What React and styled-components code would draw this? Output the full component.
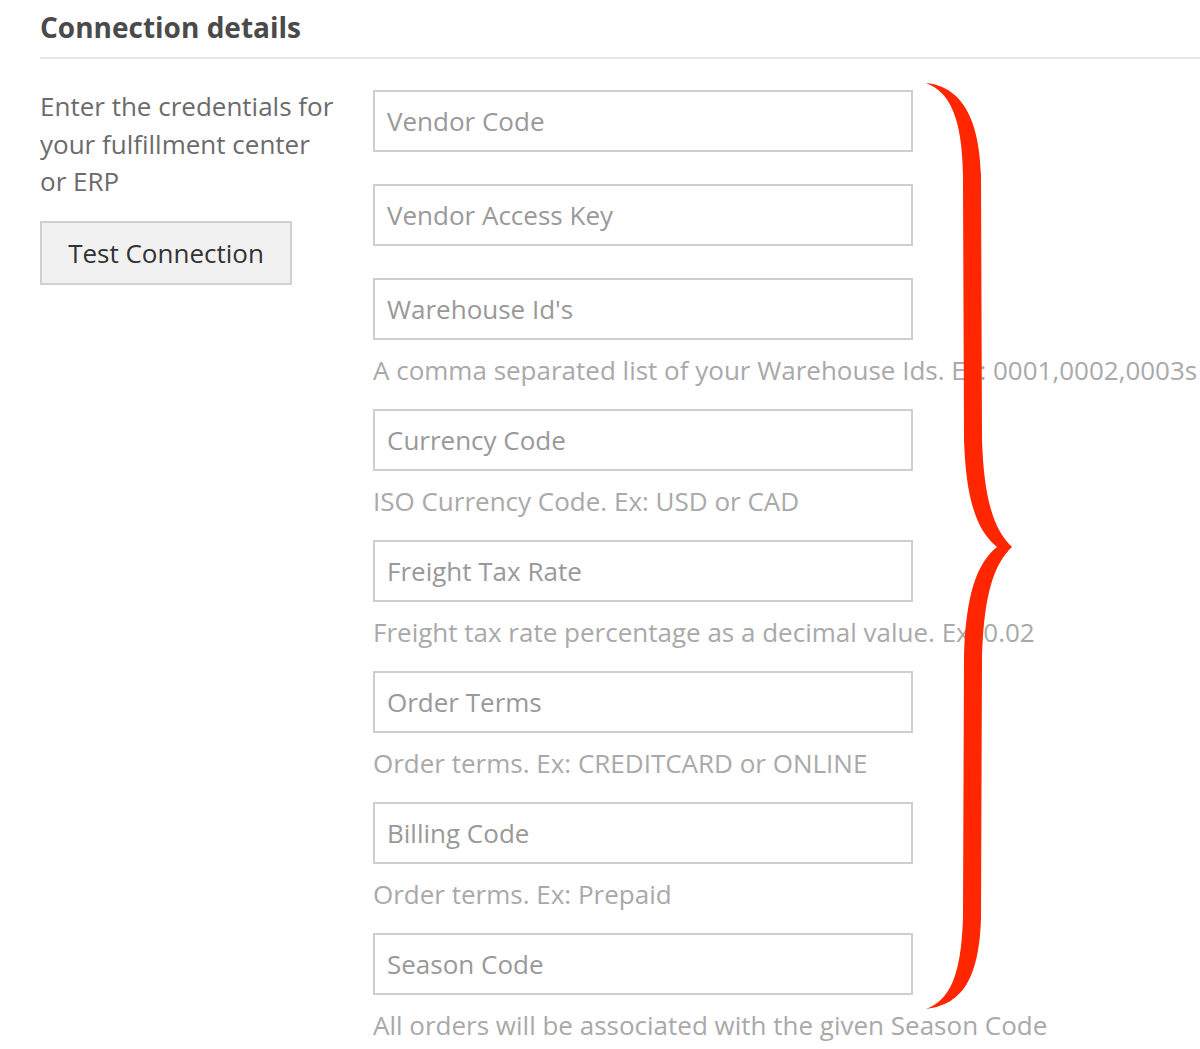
import React from "react";
import styled, { createGlobalStyle } from "styled-components";

const GlobalStyle = createGlobalStyle`
  html, body {
    margin: 0;
    padding: 0;
    background: #ffffff;
  }
  body {
    font-family: "Open Sans", "Liberation Sans", sans-serif;
    overflow: hidden;
  }
  * {
    box-sizing: border-box;
  }
`;

const fields = [
  { name: "vendorCode", placeholder: "Vendor Code" },
  { name: "vendorAccessKey", placeholder: "Vendor Access Key" },
  {
    name: "warehouseIds",
    placeholder: "Warehouse Id's",
    help: "A comma separated list of your Warehouse Ids. Ex: 0001,0002,0003s",
  },
  {
    name: "currencyCode",
    placeholder: "Currency Code",
    help: "ISO Currency Code. Ex: USD or CAD",
  },
  {
    name: "freightTaxRate",
    placeholder: "Freight Tax Rate",
    help: "Freight tax rate percentage as a decimal value. Ex: 0.02",
  },
  {
    name: "orderTerms",
    placeholder: "Order Terms",
    help: "Order terms. Ex: CREDITCARD or ONLINE",
  },
  {
    name: "billingCode",
    placeholder: "Billing Code",
    help: "Order terms. Ex: Prepaid",
  },
  {
    name: "seasonCode",
    placeholder: "Season Code",
    help: "All orders will be associated with the given Season Code",
  },
];

function Brace() {
  return (
    <BraceMark viewBox="920 78 100 936" aria-hidden="true">
      <path
        d="M 926 83
           C 955 86, 979 108, 981 175
           L 982 440
           C 984 500, 994 530, 1012 547
           C 994 564, 984 594, 982 655
           L 981 918
           C 979 985, 958 1005, 926 1009
           C 949 1000, 961 978, 963 918
           L 964 655
           C 966 596, 976 564, 997 547
           C 976 530, 966 498, 964 440
           L 963 175
           C 962 118, 950 92, 926 83 Z"
        fill="#ff2600"
      />
    </BraceMark>
  );
}

function App() {
  return (
    <>
      <GlobalStyle />
      <Page>
        <Title>Connection details</Title>
        <Divider />
        <Section>
          <Intro>
            <IntroText>
              Enter the credentials for your fulfillment center or ERP
            </IntroText>
            <TestButton type="button">Test Connection</TestButton>
          </Intro>
          <Fields>
            {fields.map((field) => (
              <FieldGroup key={field.name}>
                <TextInput name={field.name} placeholder={field.placeholder} />
                {field.help && <Help>{field.help}</Help>}
              </FieldGroup>
            ))}
          </Fields>
        </Section>
        <Brace />
      </Page>
    </>
  );
}

const Page = styled.div`
  position: relative;
  width: 1200px;
  height: 1049px;
  padding-left: 40px;
  overflow: hidden;
`;

const Title = styled.h2`
  margin: 8px 0 0;
  font-size: 28px;
  line-height: 38px;
  font-weight: 700;
  color: #4a4a4a;
`;

const Divider = styled.hr`
  margin: 11px 0 0;
  border: 0;
  height: 2px;
  background: #e8e8e8;
`;

const Section = styled.section`
  display: grid;
  grid-template-columns: 300px 540px;
  column-gap: 33px;
  padding-top: 29px;
`;

const Intro = styled.div`
  display: flex;
  flex-direction: column;
  align-items: flex-start;
`;

const IntroText = styled.p`
  margin: 0;
  font-size: 26px;
  line-height: 37.5px;
  color: #6b6b6b;
`;

const TestButton = styled.button`
  margin-top: 20px;
  width: 252px;
  height: 64px;
  padding: 0;
  border: 2px solid #d0d0d0;
  background: #f1f1f1;
  font-family: inherit;
  font-size: 26px;
  color: #333333;
`;

const Fields = styled.div`
  display: flex;
  flex-direction: column;
  padding-top: 2px;
`;

const FieldGroup = styled.div`
  display: flex;
  flex-direction: column;
  margin-bottom: 32px;
`;

const TextInput = styled.input`
  width: 540px;
  height: 62px;
  padding: 0 12px;
  border: 2px solid #cecece;
  font-family: inherit;
  font-size: 26px;
  color: #555555;
  outline: none;

  &::placeholder {
    color: #999999;
  }
`;

const Help = styled.div`
  margin: 14px 0 -9px;
  font-size: 26px;
  line-height: 32px;
  color: #a9a9a9;
  white-space: nowrap;
`;

const BraceMark = styled.svg`
  position: absolute;
  left: 920px;
  top: 78px;
  width: 100px;
  height: 936px;
`;

export default App;
